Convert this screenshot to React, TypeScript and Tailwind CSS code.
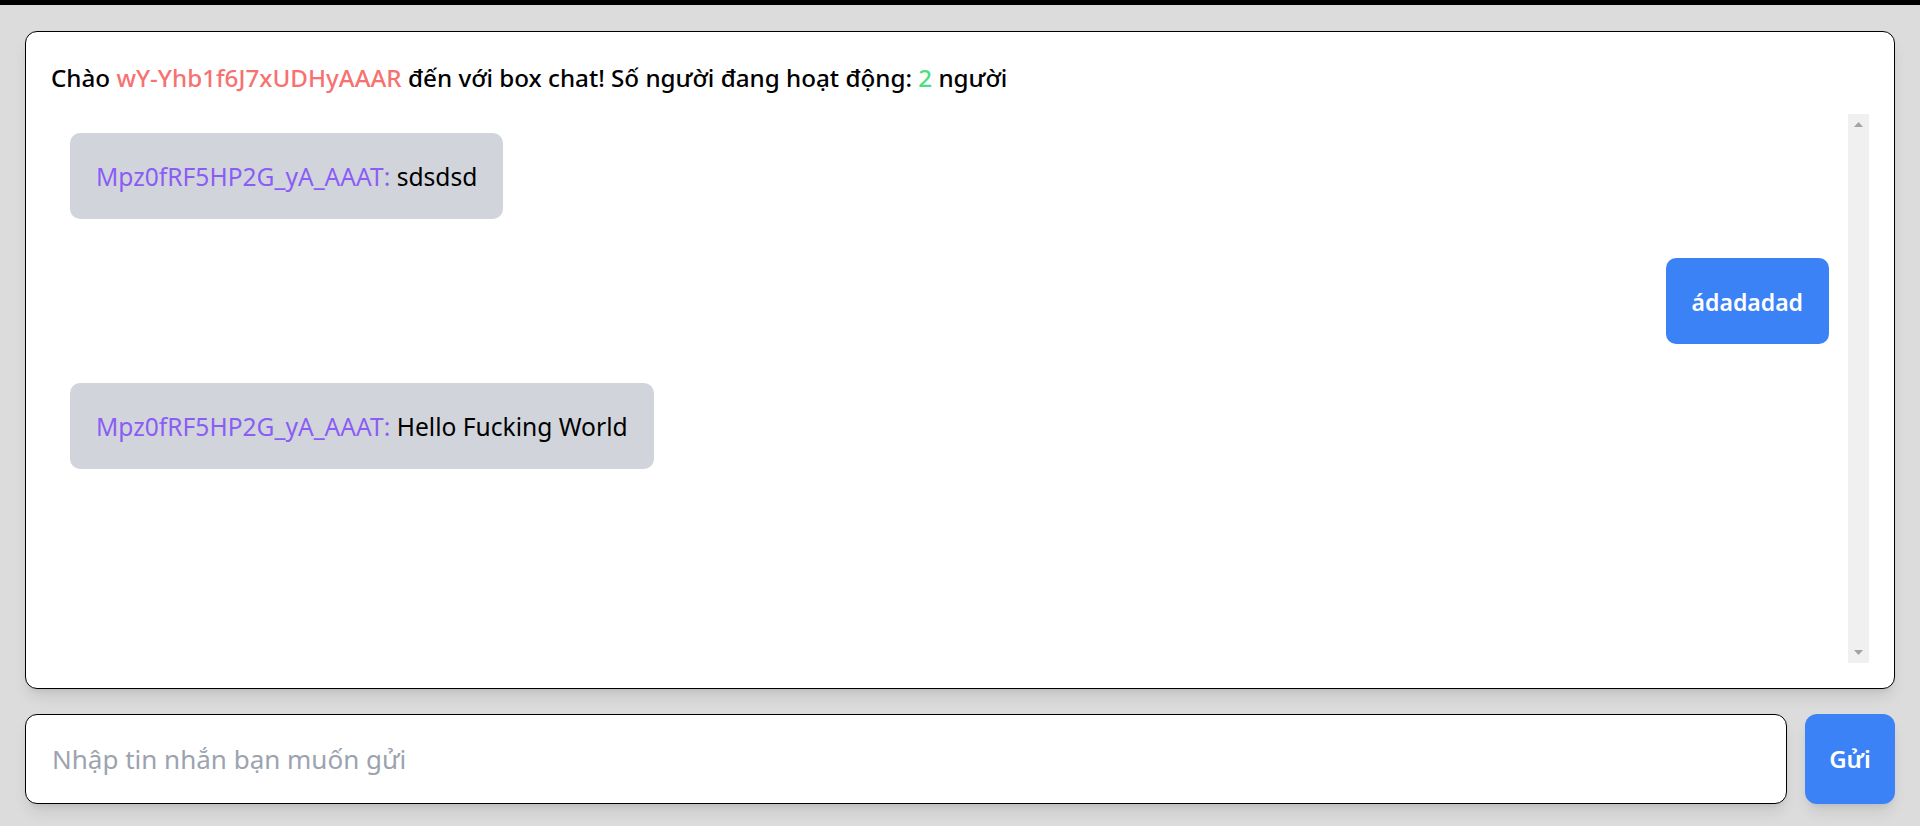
const messages = [
  { id: 1, user: 'Mpz0fRF5HP2G_yA_AAAT', text: 'sdsdsd', mine: false },
  { id: 2, user: 'wY-Yhb1f6J7xUDHyAAAR', text: 'ádadadad', mine: true },
  { id: 3, user: 'Mpz0fRF5HP2G_yA_AAAT', text: 'Hello Fucking World', mine: false },
]

function ScrollTrack() {
  return (
    <div className="flex w-[21px] shrink-0 flex-col items-center justify-between bg-[#f0f0f0] pt-[8px] pb-[8px]">
      <svg width="9" height="5" viewBox="0 0 9 5">
        <path d="M4.5 0L9 5H0z" fill="#a3a3a3" />
      </svg>
      <svg width="9" height="5" viewBox="0 0 9 5">
        <path d="M0 0h9L4.5 5z" fill="#a3a3a3" />
      </svg>
    </div>
  )
}

export default function App() {
  return (
    <div className="min-h-screen bg-[#dcdcdc] font-['Noto_Sans',sans-serif] text-black">
      <div className="h-[5px] bg-black" />
      <div className="px-[25px] pt-[26px] pb-[22px]">
        <div className="flex h-[658px] flex-col rounded-xl border border-black bg-white p-[25px] shadow-lg">
          <p className="mt-[3px] text-[24.2px] leading-[35px] font-medium">
            Chào <span className="text-[#f87171]">wY-Yhb1f6J7xUDHyAAAR</span> đến với box chat! Số người đang hoạt
            động: <span className="text-[#4ade80]">2</span> người
          </p>
          <div className="mt-[19px] flex min-h-0 flex-1">
            <div className="flex min-w-0 flex-1 flex-col gap-[39px] overflow-y-auto px-[19px] pt-[19px]">
              {messages.map((m) =>
                m.mine ? (
                  <div
                    key={m.id}
                    className="self-end rounded-[10px] bg-[#3b82f6] px-[26px] pt-[26px] pb-[24px] text-[23px] leading-[36px] font-semibold text-white"
                  >
                    {m.text}
                  </div>
                ) : (
                  <div
                    key={m.id}
                    className="self-start rounded-[10px] bg-[#d1d5db] px-[26px] pt-[26px] pb-[24px] text-[24.6px] leading-[36px]"
                  >
                    <span className="text-[#8b5cf6]">{m.user}:</span> {m.text}
                  </div>
                ),
              )}
            </div>
            <ScrollTrack />
          </div>
        </div>

        <div className="mt-[25px] flex gap-[18px]">
          <input
            className="h-[90px] flex-1 rounded-xl border border-black bg-white px-[26px] text-[26px] shadow-lg outline-none placeholder:text-[#9ca3af]"
            placeholder="Nhập tin nhắn bạn muốn gửi"
          />
          <button className="h-[90px] w-[90px] rounded-xl bg-[#3b82f6] text-[24px] font-semibold text-white shadow-lg">
            Gửi
          </button>
        </div>
      </div>
    </div>
  )
}
